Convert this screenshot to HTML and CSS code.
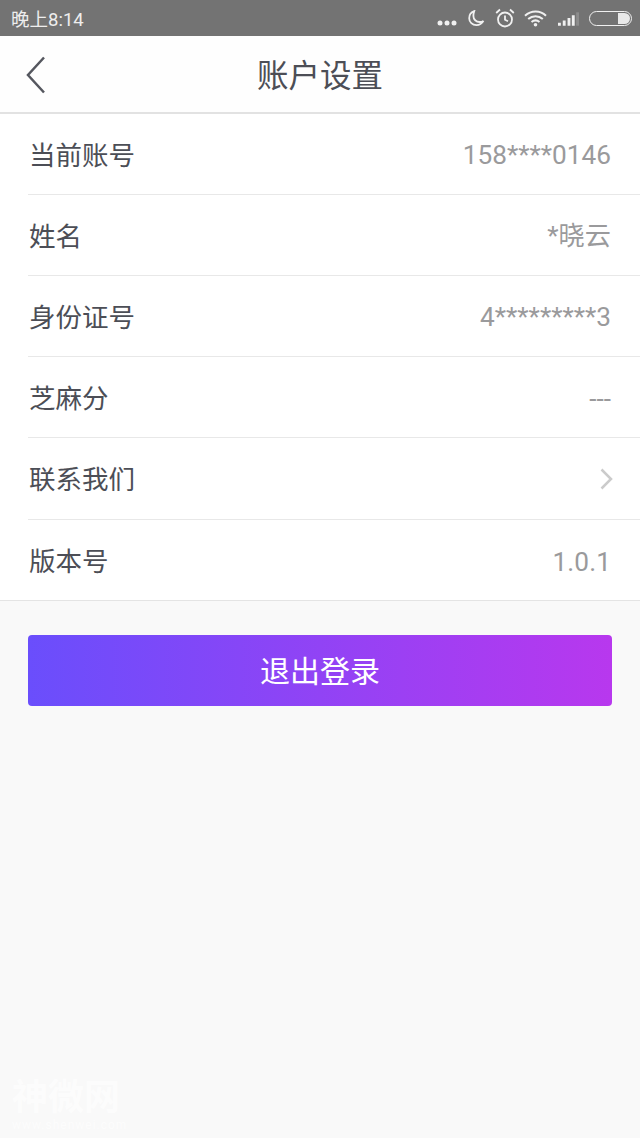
FILE: index.html
```html
<!DOCTYPE html>
<html lang="zh-CN">
<head>
  <meta charset="UTF-8">
  <meta name="viewport" content="width=device-width, initial-scale=1.0">
  <title>账户设置</title>
  <link rel="stylesheet" href="styles.css">
</head>
<body>
  <div class="status">
    <span class="time">晚上8:14</span>
    <div class="status-icons">
      <svg class="dots" width="20" height="6" viewBox="0 0 20 6"><circle cx="3" cy="3" r="2.500"/><circle cx="10" cy="3" r="2.500"/><circle cx="17" cy="3" r="2.500"/></svg>
      <svg class="moon" width="17" height="17" viewBox="0 0 17 17"><path d="M6.200 1.200C3 2.400 1.200 5 1.200 8.200c0 4 3.200 7 7.200 7 2.900 0 5.500-1.500 7-4.300-1 .8-2.500 1.100-3.800 1.100-3.500 0-6.200-2.700-6.200-6 0-1.600.3-3.300.8-4.800z"/></svg>
      <svg class="alarm" width="20" height="20" viewBox="0 0 20 20"><circle cx="10" cy="11.500" r="7"/><path d="M10 7.500v4.300l3 1.500M1.200 5L5 1.500M18.800 5L15 1.500"/></svg>
      <svg class="wifi" width="23" height="17" viewBox="0 0 23 17"><path d="M1 5.800C7 .3 16-.2 22 5.800M4.200 9C8.500 5.200 14.500 5.200 18.800 9M7.500 12c2.500-2 5.500-2 8 0"/><circle class="fill" cx="11.500" cy="14.800" r="1.800"/></svg>
      <svg class="signal" width="21" height="14" viewBox="0 0 22 14"><path d="M0 11h3v3H0zM5 8.500h3V14H5zM10 6h3v8h-3zM14.500 3h3v11h-3z" fill="#f0f0f0"/><path d="M19 0h3v14h-3z" fill="#8c8c8c"/></svg>
      <div class="battery"><div class="battery-level"></div></div>
    </div>
  </div>

  <div class="header">
    <svg class="back" width="20" height="38" viewBox="0 0 20 38"><path d="M18 1.500L2 19l16 17.500"/></svg>
    <h1 class="title">账户设置</h1>
  </div>

  <ul class="list">
    <li class="item"><span class="label">当前账号</span><span class="value">158****0146</span></li>
    <li class="item"><span class="label">姓名</span><span class="value cjk">*晓云</span></li>
    <li class="item"><span class="label">身份证号</span><span class="value">4*********3</span></li>
    <li class="item"><span class="label">芝麻分</span><span class="value dash">---</span></li>
    <li class="item"><span class="label">联系我们</span><svg class="arrow" width="13" height="22" viewBox="0 0 13 22"><path d="M1.500 1.500L11 11l-9.500 9.500"/></svg></li>
    <li class="item"><span class="label">版本号</span><span class="value version">1.0.1</span></li>
  </ul>

  <a href="javascript:;" class="logout">退出登录</a>

  <div class="watermark">
    <div class="mark-name">神微网</div>
    <div class="mark-sub">www.shenwei.com</div>
  </div>
</body>
</html>
```
FILE: styles.css
```css
* {
  box-sizing: border-box;
}

html, body {
  height: 100%;
}

body {
  position: relative;
  margin: 0;
  overflow: hidden;
  background-color: #f9f9f9;
  font-family: Roboto, "Noto Sans CJK SC", sans-serif;
}

ul {
  margin: 0;
  padding: 0;
  list-style: none;
}

a {
  text-decoration: none;
}

.status {
  display: flex;
  justify-content: space-between;
  align-items: center;
  height: 36px;
  padding: 0 8px 0 11px;
  background-color: #737373;
  color: #eee;
}

.time {
  font-size: 18.500px;
}

.status-icons {
  display: flex;
  align-items: center;
}

.status-icons svg {
  display: block;
}

.dots {
  margin: 10px 11px 0 0;
  fill: #f0f0f0;
}

.moon, .alarm, .wifi {
  fill: none;
  stroke: #f0f0f0;
  stroke-width: 1.800;
}

.moon {
  margin-right: 10px;
}

.alarm {
  margin-right: 9px;
}

.wifi {
  margin-right: 11px;
  stroke-width: 2;
}

.wifi .fill {
  fill: #f0f0f0;
  stroke: none;
}

.signal {
  margin: 1px 10px 0 0;
}

.battery {
  display: flex;
  justify-content: flex-end;
  width: 43px;
  height: 15px;
  padding: 1px;
  border: 1.500px solid #f0f0f0;
  border-radius: 8px;
}

.battery-level {
  width: 12px;
  background-color: #e8e8e8;
  border-radius: 0 6px 6px 0;
}

.header {
  position: relative;
  height: 78px;
  background-color: #fefefe;
  border-bottom: 2px solid #e2e2e2;
}

.back {
  position: absolute;
  left: 26px;
  top: 20px;
  fill: none;
  stroke: #55575f;
  stroke-width: 2.500;
}

.title {
  margin: 0;
  padding-top: 2px;
  font-size: 31.500px;
  font-weight: 400;
  line-height: 78px;
  text-align: center;
  color: #4c4e56;
}

.list {
  background-color: #fff;
  padding-left: 28px;
  border-bottom: 1px solid #e4e4e4;
}

.item {
  display: flex;
  justify-content: space-between;
  align-items: center;
  height: 81px;
  padding-right: 29px;
  border-bottom: 1px solid #e8e8e8;
}

.item:nth-child(5) {
  height: 82px;
}

.item:last-child {
  height: 80px;
  border-bottom: 0;
}

.label {
  margin: 0 0 2px 1px;
  font-size: 26.500px;
  color: #4c4e56;
}

.value {
  margin-top: 2px;
  font-size: 26.200px;
  color: #9a9a9c;
}

.value.cjk {
  margin-top: 0;
  margin-bottom: 2px;
}

.value.dash {
  margin-top: 3px;
}

.value.version {
  margin-top: 3px;
  letter-spacing: 0.1px;
}

.arrow {
  fill: none;
  stroke: #cbcbcb;
  stroke-width: 2.500;
  margin-right: -2px;
}

.logout {
  display: block;
  height: 71px;
  margin: 34px 28px 0;
  padding-top: 1px;
  border-radius: 4px;
  background: linear-gradient(90deg, #6a4efc, #b838ee);
  font-size: 30px;
  line-height: 71px;
  text-align: center;
  color: #fff;
}

.watermark {
  position: absolute;
  left: 12px;
  bottom: 6px;
  color: #fff;
  opacity: 0.6;
}

.mark-name {
  font-size: 36px;
  font-weight: 700;
  line-height: 40px;
}

.mark-sub {
  font-size: 12px;
  line-height: 14px;
  letter-spacing: 1px;
}
```
